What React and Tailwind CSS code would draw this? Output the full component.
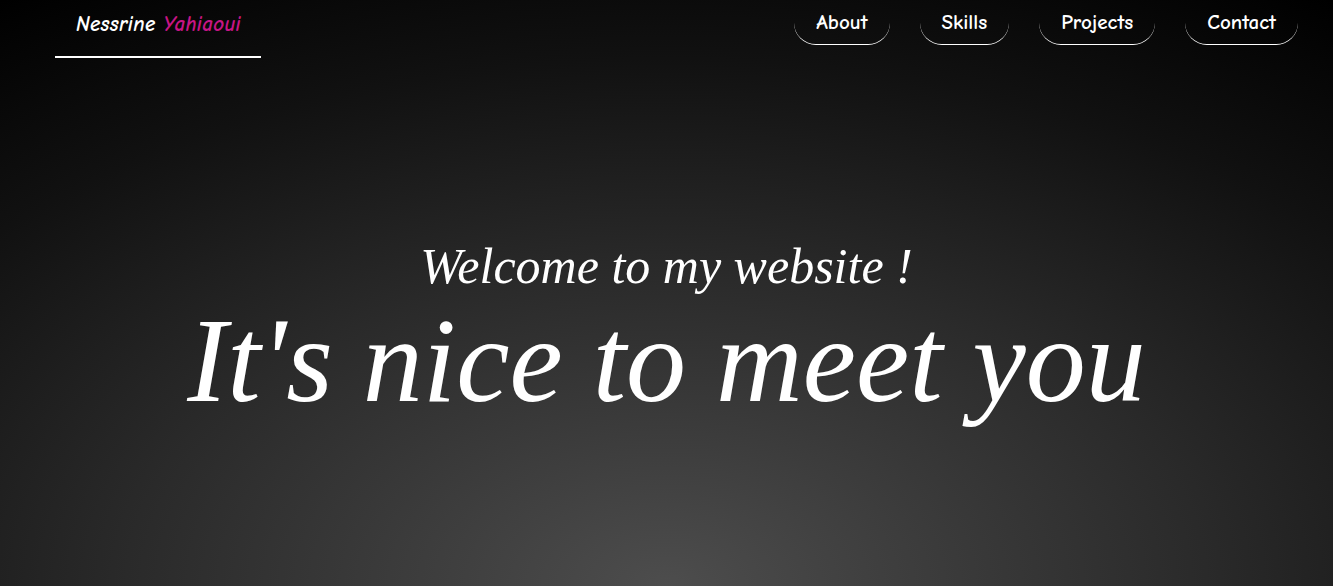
const links = ["About", "Skills", "Projects", "Contact"];

const comic = { fontFamily: '"Comic Sans MS", "Comic Neue", "Noto Sans", sans-serif' };

const App = () => {
  return (
    <div className="w-full h-[586px] overflow-hidden bg-[radial-gradient(ellipse_90%_120%_at_50%_100%,#4d4d4d_0%,#2a2a2a_45%,#111111_75%,#000000_100%)]">
      {/* Header */}
      <header className="flex items-start justify-between pl-[55px] pr-[35px]" style={comic}>
        <div className="w-[206px] h-[58px] border-b-2 border-white pt-[9px] pl-[21px] text-[21px] font-bold italic tracking-[0.3px] text-white">
          Nessrine <span className="text-[#c71585]">Yahiaoui</span>
        </div>

        <nav className="flex gap-[30px]">
          {links.map((link) => (
            <a
              key={link}
              href="#"
              className="h-[45px] px-[22px] pt-[7px] rounded-[22px] border-b border-white text-[21px] font-bold text-white"
            >
              {link}
            </a>
          ))}
        </nav>
      </header>

      {/* Hero */}
      <section
        className="flex flex-col items-center text-white italic pt-[178px]"
        style={{ fontFamily: '"Liberation Serif", "Times New Roman", serif' }}
      >
        <h2 className="text-[50px] leading-[60px]">Welcome to my website !</h2>
        <h1 className="mt-[5px] text-[120px] leading-[120px]">It's nice to meet you</h1>
      </section>
    </div>
  );
};

export default App;
